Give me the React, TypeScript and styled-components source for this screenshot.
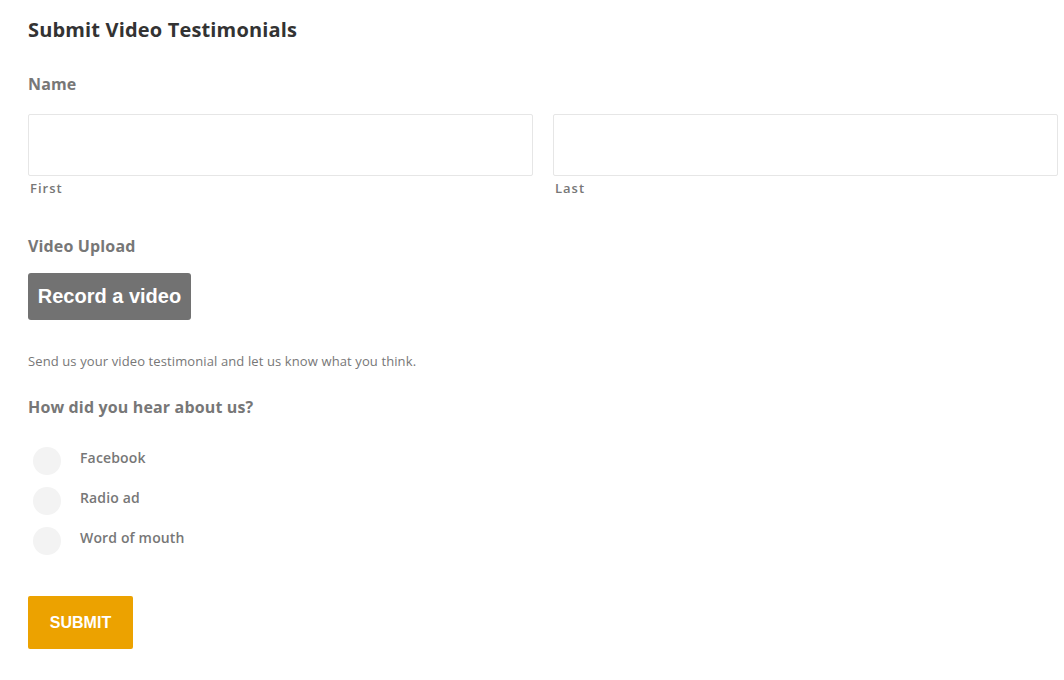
import React from "react";
import styled, { createGlobalStyle } from "styled-components";

const Global = createGlobalStyle`
  html, body { margin: 0; padding: 0; background: #fff; }
  body { font-family: "Open Sans", "Liberation Sans", sans-serif; }
  * { box-sizing: border-box; }
`;

const Page = styled.form`
  padding: 16px 6px 0 28px;
  width: 1064px;
  display: flex;
  flex-direction: column;
`;

const Title = styled.h2`
  margin: 0;
  font-size: 20px;
  line-height: 28px;
  font-weight: 700;
  letter-spacing: 0.16px;
  color: #333;
`;

const FieldLabel = styled.div<{ $mt: number }>`
  margin-top: ${(p) => p.$mt}px;
  font-size: 16px;
  line-height: 22px;
  font-weight: 700;
  letter-spacing: 0.15px;
  color: #777;
`;

const NameRow = styled.div`
  margin-top: 19px;
  display: grid;
  grid-template-columns: 1fr 1fr;
  gap: 20px;
`;

const NameCol = styled.div`
  display: flex;
  flex-direction: column;
`;

const TextInput = styled.input`
  height: 62px;
  width: 100%;
  border: 1px solid #e6e6e6;
  border-radius: 2px;
  background: #fff;
  outline: none;
`;

const SubLabel = styled.span`
  margin-top: 3px;
  padding-left: 2px;
  font-size: 13px;
  line-height: 18px;
  font-weight: 600;
  letter-spacing: 1px;
  color: #777;
`;

const RecordButton = styled.button`
  margin-top: 16px;
  align-self: flex-start;
  height: 47px;
  width: 163px;
  border: none;
  border-radius: 3px;
  background: #727272;
  color: #fff;
  font-family: "Liberation Sans", Arial, sans-serif;
  font-weight: 700;
  font-size: 20px;
  padding: 0;
`;

const Help = styled.p`
  margin: 32px 0 0;
  font-size: 13px;
  line-height: 18px;
  letter-spacing: 0.11px;
  color: #777;
`;

const Options = styled.div`
  margin-top: 29px;
  display: flex;
  flex-direction: column;
  gap: 12px;
`;

const Option = styled.label`
  display: flex;
  align-items: center;
  gap: 19px;
  padding-left: 5px;
  height: 28px;
`;

const Dot = styled.span`
  width: 28px;
  height: 28px;
  border-radius: 50%;
  background: #f3f3f3;
  flex: none;
`;

const OptionText = styled.span`
  font-size: 14px;
  font-weight: 600;
  letter-spacing: 0.15px;
  color: #777;
  margin-top: -7px;
`;

const SubmitButton = styled.button`
  margin-top: 41px;
  align-self: flex-start;
  width: 105px;
  height: 53px;
  border: none;
  border-radius: 2px;
  background: #eca200;
  color: #fff;
  font-family: "Liberation Sans", Arial, sans-serif;
  font-weight: 700;
  font-size: 16px;
  padding: 0;
`;

export default function App() {
  return (
    <>
      <Global />
      <Page onSubmit={(e) => e.preventDefault()}>
        <Title>Submit Video Testimonials</Title>
        <FieldLabel $mt={29}>Name</FieldLabel>
        <NameRow>
          <NameCol>
            <TextInput type="text" />
            <SubLabel>First</SubLabel>
          </NameCol>
          <NameCol>
            <TextInput type="text" />
            <SubLabel>Last</SubLabel>
          </NameCol>
        </NameRow>
        <FieldLabel $mt={38}>Video Upload</FieldLabel>
        <RecordButton type="button">Record a video</RecordButton>
        <Help>Send us your video testimonial and let us know what you think.</Help>
        <FieldLabel $mt={26}>How did you hear about us?</FieldLabel>
        <Options>
          {["Facebook", "Radio ad", "Word of mouth"].map((o) => (
            <Option key={o}>
              <Dot />
              <OptionText>{o}</OptionText>
            </Option>
          ))}
        </Options>
        <SubmitButton type="submit">SUBMIT</SubmitButton>
      </Page>
    </>
  );
}
